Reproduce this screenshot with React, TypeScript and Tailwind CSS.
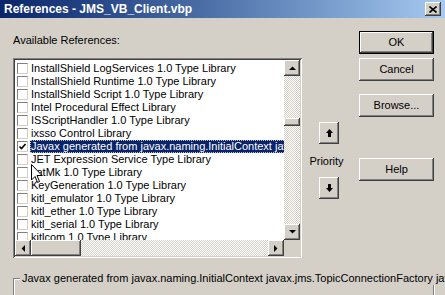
import React from "react";

const items = [
  "InstallShield LogServices 1.0 Type Library",
  "InstallShield Runtime 1.0 Type Library",
  "InstallShield Script 1.0 Type Library",
  "Intel Procedural Effect Library",
  "ISScriptHandler 1.0 Type Library",
  "ixsso Control Library",
  "Javax generated from javax.naming.InitialContext javax.jms.TopicConnectionFactory",
  "JET Expression Service Type Library",
  "JatMk 1.0 Type Library",
  "KeyGeneration 1.0 Type Library",
  "kitl_emulator 1.0 Type Library",
  "kitl_ether 1.0 Type Library",
  "kitl_serial 1.0 Type Library",
  "kitlcom 1.0 Type Library",
];

const SELECTED = 6;

const raised =
  "bg-[#d4d0c8] shadow-[inset_-1px_-1px_#404040,inset_1px_1px_#fff,inset_-2px_-2px_#808080,inset_2px_2px_#d4d0c8]";

function Button({ label, isDefault }: { label: string; isDefault?: boolean }) {
  if (isDefault) {
    return (
      <div className="w-[75px] h-[23px] border border-black">
        <div className={`${raised} w-full h-full flex items-center justify-center`}>{label}</div>
      </div>
    );
  }
  return (
    <div className={`${raised} w-[75px] h-[23px] flex items-center justify-center`}>{label}</div>
  );
}

function Tri({ dir }: { dir: "up" | "down" | "left" | "right" }) {
  const d = {
    up: "M0 4 L3.5 0.5 L7 4 Z",
    down: "M0 0 L7 0 L3.5 3.5 Z",
    left: "M4 0 L4 7 L0.5 3.5 Z",
    right: "M0 0 L3.5 3.5 L0 7 Z",
  }[dir];
  const horiz = dir === "left" || dir === "right";
  return (
    <svg width={horiz ? 4 : 7} height={horiz ? 7 : 4} viewBox={horiz ? "0 0 4 7" : "0 0 7 4"}>
      <path d={d} fill="#000" />
    </svg>
  );
}

function ScrollBtn({ dir }: { dir: "up" | "down" | "left" | "right" }) {
  return (
    <div className={`${raised} w-[16px] h-[16px] flex items-center justify-center shrink-0`}>
      <Tri dir={dir} />
    </div>
  );
}

function Checkbox({ checked }: { checked: boolean }) {
  return (
    <div className="w-[11px] h-[11px] shrink-0 bg-white border-t border-l border-[#808080] border-r-[#d4d0c8] border-b-[#d4d0c8] border-r border-b flex items-center justify-center">
      {checked && (
        <svg width="9" height="9" viewBox="0 0 9 9">
          <path d="M1.5 4.5 L3.5 6.5 L7.5 2" stroke="#000" strokeWidth="1.6" fill="none" />
        </svg>
      )}
    </div>
  );
}

const track =
  "bg-[image:repeating-conic-gradient(#fff_0%_25%,#d4d0c8_0%_50%)] bg-size-[2px_2px]";

function ListBox() {
  return (
    <div className="mt-[11px] w-[289px] h-[200px] shadow-[inset_1px_1px_#808080,inset_-1px_-1px_#fff,inset_2px_2px_#404040,inset_-2px_-2px_#d4d0c8] p-[2px]">
      <div className="grid grid-cols-[1fr_16px] grid-rows-[1fr_16px] w-full h-full">
        <div className="bg-white overflow-hidden pt-[2px]">
          {items.map((it, i) => (
            <div key={it} className="h-[13px] flex items-center pl-[2px] whitespace-nowrap">
              <Checkbox checked={i === SELECTED} />
              <div
                className={`ml-[2px] pl-[1px] pr-[2px] h-[13px] leading-[13px] ${
                  i === SELECTED
                    ? "bg-[#0a246a] text-white outline outline-1 outline-dotted outline-[#c0c0c0] -outline-offset-1"
                    : ""
                }`}
              >
                {it}
              </div>
            </div>
          ))}
        </div>
        <div className={`flex flex-col ${track}`}>
          <ScrollBtn dir="up" />
          <div className="h-[42px]" />
          <div className={`${raised} h-[8px]`} />
          <div className="flex-1" />
          <ScrollBtn dir="down" />
        </div>
        <div className={`flex ${track}`}>
          <ScrollBtn dir="left" />
          <div className={`${raised} w-[50px]`} />
          <div className="flex-1" />
          <ScrollBtn dir="right" />
        </div>
        <div className="bg-[#d4d0c8]" />
      </div>
    </div>
  );
}

function PriorityArrow({ up }: { up: boolean }) {
  return (
    <div className={`${raised} w-[20px] h-[22px] flex items-center justify-center`}>
      <svg width="7" height="8" viewBox="0 0 7 8">
        <path
          d={up ? "M3.5 0 L7 4 L5 4 L5 8 L2 8 L2 4 L0 4 Z" : "M3.5 8 L7 4 L5 4 L5 0 L2 0 L2 4 L0 4 Z"}
          fill="#000"
        />
      </svg>
    </div>
  );
}

export default function App() {
  return (
    <div className="relative w-[445px] h-[295px] overflow-hidden bg-[#d4d0c8] text-black text-[11px] font-['Liberation_Sans',Arial,sans-serif]">
      <div className="h-[18px] flex items-center justify-between pl-[4px] pr-[4px] bg-linear-to-r from-[#0a246a] to-[#a6caf0]">
        <span className="text-white font-bold text-[12px] leading-[18px] whitespace-nowrap">
          References - JMS_VB_Client.vbp
        </span>
        <div className={`${raised} w-[16px] h-[14px] flex items-center justify-center`}>
          <svg width="8" height="7" viewBox="0 0 8 7">
            <path d="M0.5 0.5 L7.5 6.5 M7.5 0.5 L0.5 6.5" stroke="#000" strokeWidth="1.6" />
          </svg>
        </div>
      </div>

      <div className="flex pl-[13px]">
        <div className="flex flex-col pt-[16px]">
          <div className="h-[13px] leading-[13px]">Available References:</div>
          <ListBox />
        </div>

        <div className="ml-[17px] w-[20px] flex flex-col items-center pt-[104px]">
          <PriorityArrow up />
          <div className="mt-[11px] h-[13px] leading-[13px] whitespace-nowrap -ml-[5px]">Priority</div>
          <div className="mt-[9px]">
            <PriorityArrow up={false} />
          </div>
        </div>

        <div className="ml-[20px] flex flex-col pt-[13px]">
          <Button label="OK" isDefault />
          <div className="mt-[4px]">
            <Button label="Cancel" />
          </div>
          <div className="mt-[13px]">
            <Button label="Browse..." />
          </div>
          <div className="mt-[41px]">
            <Button label="Help" />
          </div>
        </div>
      </div>

      <div className="relative mt-[20px] ml-[13px] w-[421px] h-[40px] border border-[#808080] shadow-[inset_1px_1px_#fff,1px_1px_#fff]">
        <span className="absolute -top-[7px] left-[6px] px-[2px] h-[13px] leading-[13px] bg-[#d4d0c8] whitespace-nowrap">
          Javax generated from javax.naming.InitialContext javax.jms.TopicConnectionFactory javax.jms.Topic
        </span>
      </div>

      <svg className="absolute left-[31px] top-[164px]" width="12" height="20" viewBox="0 0 12 20">
        <path d="M0.5 0.5 L0.5 16 L4 12.5 L6.5 18.5 L8.5 17.5 L6 11.5 L11 11.5 Z" fill="#fff" stroke="#000" strokeWidth="1" />
      </svg>
    </div>
  );
}
